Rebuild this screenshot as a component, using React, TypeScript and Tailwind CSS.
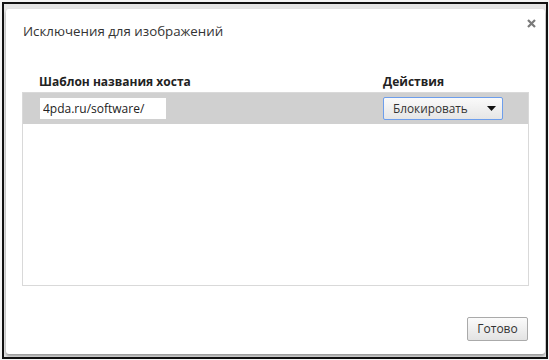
import { useState } from 'react';

const font = { fontFamily: '"Open Sans", "Liberation Sans", sans-serif' };

function CloseIcon() {
  return (
    <svg width="9" height="9" viewBox="0 0 9 9" className="block">
      <path d="M1 1 L8 8 M8 1 L1 8" stroke="#7a7a7a" strokeWidth="2.2" strokeLinecap="butt" />
    </svg>
  );
}

export default function App() {
  const [host, setHost] = useState('4pda.ru/software/');

  return (
    <div className="w-[549px] h-[360px] bg-[#f3f3f3] pl-[2px] pr-[1px] pt-[2px] pb-[1px]" style={font}>
      <div className="w-full h-full border-2 border-[#111] bg-[#e4e4e4] pl-[2px] pr-px pt-[5px] pb-[3px]">
        <div className="relative w-full h-full bg-white rounded-[3px] shadow-[0_2px_3px_rgba(0,0,0,0.35)] flex flex-col">
          <button className="absolute top-[10px] right-[9px]">
            <CloseIcon />
          </button>

          <h1 className="pl-[17px] pt-[13px] text-[13.3px] leading-[18px] text-[#333] font-normal">
            Исключения для изображений
          </h1>

          <div className="flex pl-[33px] mt-[34px] text-[12px] leading-[16px] font-bold text-[#222]">
            <div className="w-[344px]">Шаблон названия хоста</div>
            <div>Действия</div>
          </div>

          <div className="ml-[16px] mr-[16px] mt-[2px] h-[194px] border border-[#d9d9d9]">
            <div className="h-[31px] bg-[#d0d0d0] flex items-center pl-[17px]">
              <input
                value={host}
                onChange={e => setHost(e.target.value)}
                className="w-[126px] h-[21px] bg-white px-[3px] text-[12px] text-[#222] outline-none"
                style={font}
              />
              <div className="ml-[217px] w-[120px] h-[23px] border border-[#6d9eec] rounded-[2px] bg-gradient-to-b from-[#fafafa] to-[#e6e6e6] flex items-center pl-[9px] pr-[6px] text-[11.8px] text-[#333]">
                <span className="flex-1">Блокировать</span>
                <svg width="9" height="5" viewBox="0 0 9 5">
                  <path d="M0 0 H9 L4.5 5 Z" fill="#111" />
                </svg>
              </div>
            </div>
          </div>

          <div className="flex-1 flex items-end justify-end pr-[17px] pb-[13px]">
            <button className="w-[61px] h-[24px] border border-[#aaa] rounded-[2px] bg-gradient-to-b from-[#fbfbfb] to-[#e3e3e3] text-[12px] text-[#333]" style={font}>
              Готово
            </button>
          </div>
        </div>
      </div>
    </div>
  );
}
